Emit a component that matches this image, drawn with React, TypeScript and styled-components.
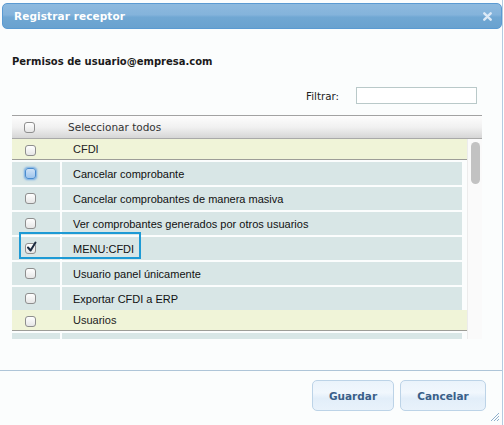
import React from "react";
import styled, { createGlobalStyle } from "styled-components";

const GlobalStyle = createGlobalStyle`
  html, body {
    margin: 0;
    padding: 0;
    background: #ffffff;
  }
`;

type Row =
  | { kind: "group"; label: string }
  | { kind: "item"; label: string; checked?: boolean; focused?: boolean; selected?: boolean };

// the last item is only partly scrolled into view, so its label is left empty
const rows: Row[] = [
  { kind: "group", label: "CFDI" },
  { kind: "item", label: "Cancelar comprobante", focused: true },
  { kind: "item", label: "Cancelar comprobantes de manera masiva" },
  { kind: "item", label: "Ver comprobantes generados por otros usuarios" },
  { kind: "item", label: "MENU:CFDI", checked: true, selected: true },
  { kind: "item", label: "Usuario panel únicamente" },
  { kind: "item", label: "Exportar CFDI a ERP" },
  { kind: "group", label: "Usuarios" },
  { kind: "item", label: "" },
];

const Dialog = styled.div`
  position: relative;
  width: 502px;
  height: 425px;
  background: #fbfdfd;
  border-right: 1px solid #b3cbe0;
  font-family: "DejaVu Sans", Verdana, sans-serif;
  overflow: hidden;
`;

const TitleBar = styled.div`
  margin: 3px 0 0 2px;
  height: 24px;
  border: 1px solid #5a9ad2;
  border-radius: 5px;
  background: linear-gradient(
    to bottom,
    #8dbadf 0%,
    #84b3db 45%,
    #70a7d3 55%,
    #6aa2cf 100%
  );
  display: flex;
  align-items: center;
  justify-content: space-between;
  padding: 0 9px 0 11px;
`;

const Title = styled.span`
  color: #ffffff;
  font-weight: bold;
  font-size: 10.5px;
  letter-spacing: 0.1px;
`;

const CloseIcon = styled.svg`
  width: 9px;
  height: 9px;
`;

const Body = styled.div`
  padding: 26px 20px 0 12px;
`;

const Heading = styled.div`
  font-size: 10px;
  font-weight: bold;
  color: #1a1a1a;
  height: 14px;
  line-height: 14px;
`;

const FilterRow = styled.div`
  display: flex;
  justify-content: flex-end;
  align-items: center;
  gap: 17px;
  margin-top: 18px;
  padding-right: 5px;
`;

const FilterLabel = styled.label`
  font-size: 10.3px;
  color: #222;
`;

const FilterInput = styled.input`
  box-sizing: border-box;
  width: 121px;
  height: 17px;
  border: 1px solid #b9c9c9;
  background: #ffffff;
  outline: none;
`;

const Table = styled.div`
  margin-top: 11px;
  width: 470px;
`;

const HeaderRow = styled.div`
  box-sizing: border-box;
  height: 24px;
  border-top: 1px solid #a2a2a2;
  border-bottom: 1px solid #a9a9a9;
  background: linear-gradient(to bottom, #fdfdfd 0%, #f1f1f1 50%, #d6d6d6 100%);
  display: grid;
  grid-template-columns: 56px 1fr;
  align-items: center;
`;

const HeaderCheck = styled.div`
  padding-left: 12px;
  display: flex;
`;

const HeaderLabel = styled.span`
  font-size: 10.5px;
  color: #333;
`;

const ScrollArea = styled.div`
  display: flex;
  height: 200px;
`;

const List = styled.div`
  width: 455px;
  overflow: hidden;
`;

const GroupRow = styled.div`
  height: 20px;
  background: #f0f4d8;
  border-bottom: 1px solid #9d9d98;
  display: grid;
  grid-template-columns: 61px 1fr;
  align-items: start;
`;

const ItemRow = styled.div`
  position: relative;
  width: 450px;
  margin-top: 2px;
  display: grid;
  grid-template-columns: 48px 400px;
  column-gap: 2px;
  height: 23px;
`;

const CheckCell = styled.div`
  background: #d8e6e6;
  padding: 2px 0 0 13px;
`;

const GroupCheck = styled.div`
  padding: 2px 0 0 13px;
`;

const LabelCell = styled.div`
  background: #d8e6e6;
  display: flex;
  align-items: center;
  padding-left: 11px;
  font-family: "Liberation Sans", Arial, sans-serif;
  font-size: 11px;
  color: #111;
`;

const GroupLabel = styled.div`
  height: 20px;
  display: flex;
  align-items: center;
  font-family: "Liberation Sans", Arial, sans-serif;
  font-size: 11px;
  color: #222;
`;

const Box = styled.span<{ $focused?: boolean }>`
  box-sizing: border-box;
  display: inline-block;
  position: relative;
  width: 11px;
  height: 11px;
  border-radius: 3px;
  border: 1px solid ${(p) => (p.$focused ? "#4a8ccf" : "#8e8e8e")};
  background: ${(p) =>
    p.$focused
      ? "linear-gradient(to bottom, #cfe2f6, #9fc5ec)"
      : "linear-gradient(to bottom, #ffffff, #e6e6e6)"};
  box-shadow: ${(p) =>
    p.$focused ? "0 0 2px 1px rgba(80, 150, 225, 0.75)" : "none"};
`;

const Tick = styled.svg`
  position: absolute;
  left: 0px;
  top: -3px;
  width: 11px;
  height: 12px;
`;

const Selection = styled.div`
  position: absolute;
  left: 7px;
  top: -5px;
  width: 118px;
  height: 23px;
  border: 2px solid #1d9ad5;
  pointer-events: none;
`;

const ScrollTrack = styled.div`
  width: 15px;
  border-left: 1px solid #ececec;
  background: #fafafa;
  padding: 3px 0 0 3px;
  box-sizing: border-box;
`;

const Thumb = styled.div`
  width: 9px;
  height: 42px;
  border-radius: 5px;
  background: #c2c2c2;
`;

const Footer = styled.div`
  margin-top: 31px;
  border-top: 1px solid #aec5d8;
  display: flex;
  justify-content: flex-end;
  gap: 6px;
  padding: 9px 16px 0 0;
`;

const Button = styled.button<{ $w: number }>`
  width: ${(p) => p.$w}px;
  height: 31px;
  border: 1px solid #bcd3e7;
  border-radius: 5px;
  background: linear-gradient(to bottom, #eaf3fb 0%, #f1f7fd 40%, #e2eef9 60%, #e8f2fb 100%);
  color: #3a5f89;
  font-family: "DejaVu Sans", Verdana, sans-serif;
  font-weight: bold;
  font-size: 10.5px;
  padding: 0;
`;

const Grip = styled.svg`
  position: absolute;
  right: 2px;
  bottom: 3px;
  width: 11px;
  height: 11px;
`;

const Checkbox: React.FC<{ checked?: boolean; focused?: boolean }> = ({
  checked,
  focused,
}) => (
  <Box $focused={focused}>
    {checked && (
      <Tick viewBox="0 0 11 12">
        <path
          d="M2 6.5 L4.6 9.5 L9.5 1.5"
          fill="none"
          stroke="#1b2a3e"
          strokeWidth="2"
          strokeLinecap="round"
          strokeLinejoin="round"
        />
      </Tick>
    )}
  </Box>
);

export default function App() {
  return (
    <>
      <GlobalStyle />
      <Dialog>
        <TitleBar>
          <Title>Registrar receptor</Title>
          <CloseIcon viewBox="0 0 9 9">
            <path
              d="M1.3 1.3 L7.7 7.7 M7.7 1.3 L1.3 7.7"
              stroke="#dce9f6"
              strokeWidth="2.4"
              strokeLinecap="round"
            />
          </CloseIcon>
        </TitleBar>

        <Body>
          <Heading>Permisos de usuario@empresa.com</Heading>

          <FilterRow>
            <FilterLabel>Filtrar:</FilterLabel>
            <FilterInput type="text" />
          </FilterRow>

          <Table>
            <HeaderRow>
              <HeaderCheck>
                <Checkbox />
              </HeaderCheck>
              <HeaderLabel>Seleccionar todos</HeaderLabel>
            </HeaderRow>

            <ScrollArea>
              <List>
                {rows.map((row, i) =>
                  row.kind === "group" ? (
                    <GroupRow key={i}>
                      <GroupCheck>
                        <Checkbox />
                      </GroupCheck>
                      <GroupLabel>{row.label}</GroupLabel>
                    </GroupRow>
                  ) : (
                    <ItemRow key={i}>
                      <CheckCell>
                        <Checkbox checked={row.checked} focused={row.focused} />
                      </CheckCell>
                      <LabelCell>{row.label}</LabelCell>
                      {row.selected && <Selection />}
                    </ItemRow>
                  )
                )}
              </List>
              <ScrollTrack>
                <Thumb />
              </ScrollTrack>
            </ScrollArea>
          </Table>
        </Body>

        <Footer>
          <Button $w={82}>Guardar</Button>
          <Button $w={86}>Cancelar</Button>
        </Footer>

        <Grip viewBox="0 0 11 11">
          <path
            d="M10 2 L2 10 M10 5 L5 10 M10 8 L8 10"
            stroke="#8fb0cc"
            strokeWidth="1"
          />
        </Grip>
      </Dialog>
    </>
  );
}
